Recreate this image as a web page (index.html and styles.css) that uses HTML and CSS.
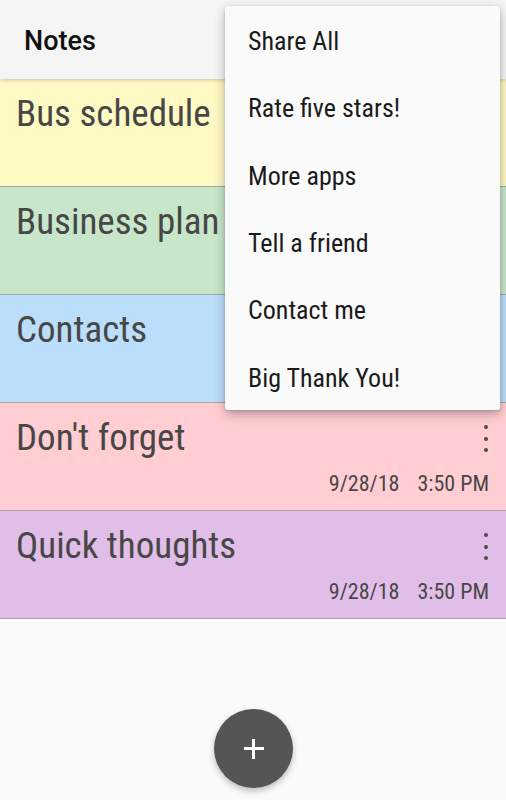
FILE: index.html
```html
<!DOCTYPE html>
<html lang="en">
<head>
<meta charset="utf-8">
<title>Notes</title>
<link rel="stylesheet" href="styles.css">
</head>
<body>
<div class="app">
  <header class="toolbar"><h1 class="toolbar-title">Notes</h1></header>
  <main class="notes">
    <article class="note note-yellow">
      <div class="note-top"><h2 class="note-title">Bus schedule</h2><span class="kebab"><i></i><i></i><i></i></span></div>
      <div class="note-date"></div>
    </article>
    <article class="note note-green">
      <div class="note-top"><h2 class="note-title">Business plan</h2><span class="kebab"><i></i><i></i><i></i></span></div>
      <div class="note-date"></div>
    </article>
    <article class="note note-blue">
      <div class="note-top"><h2 class="note-title">Contacts</h2><span class="kebab"><i></i><i></i><i></i></span></div>
      <div class="note-date"></div>
    </article>
    <article class="note note-pink">
      <div class="note-top"><h2 class="note-title">Don't forget</h2><span class="kebab"><i></i><i></i><i></i></span></div>
      <div class="note-date"><span>9/28/18</span><span>3:50 PM</span></div>
    </article>
    <article class="note note-purple">
      <div class="note-top"><h2 class="note-title">Quick thoughts</h2><span class="kebab"><i></i><i></i><i></i></span></div>
      <div class="note-date"><span>9/28/18</span><span>3:50 PM</span></div>
    </article>
  </main>
  <button class="fab" aria-label="Add note"><span class="fab-plus"></span></button>
  <ul class="menu">
    <li class="menu-item">Share All</li>
    <li class="menu-item">Rate five stars!</li>
    <li class="menu-item">More apps</li>
    <li class="menu-item">Tell a friend</li>
    <li class="menu-item">Contact me</li>
    <li class="menu-item">Big Thank You!</li>
  </ul>
</div>
</body>
</html>
```
FILE: styles.css
```css
* { box-sizing: border-box; }
html, body { margin: 0; padding: 0; }
body {
  background: #fafafa;
  font-family: Roboto, "Noto Sans", sans-serif;
  width: 506px;
  height: 800px;
  overflow: hidden;
}
.app {
  position: relative;
  height: 800px;
  display: flex;
  flex-direction: column;
}
.toolbar {
  height: 79px;
  flex: none;
  background: #f5f5f5;
  display: flex;
  align-items: center;
  padding-left: 24px;
  position: relative;
  z-index: 1;
  box-shadow: 0 1px 4px rgba(0,0,0,0.22);
}
.toolbar-title {
  margin: 0;
  font-size: 27px;
  font-weight: 500;
  color: #111;
  padding-top: 2px;
}
.notes { display: flex; flex-direction: column; }
.note {
  height: 108px;
  border-bottom: 1px solid #a5a5a5;
  padding: 16px 17px 0 16px;
  display: flex;
  flex-direction: column;
  color: #474747;
  font-stretch: condensed;
}
.note-yellow { background: #fff9c4; }
.note-green { background: #c8e6c9; }
.note-blue { background: #bbdefb; }
.note-pink { background: #ffcdd2; }
.note-purple { background: #e1bee7; }
.note-top {
  display: flex;
  justify-content: space-between;
  align-items: flex-start;
}
.note-title {
  margin: 0;
  font-size: 37px;
  font-weight: 400;
  line-height: 37px;
}
.kebab {
  display: flex;
  flex-direction: column;
  gap: 7.5px;
  margin-top: 6px;
  margin-right: 1px;
}
.kebab i {
  display: block;
  width: 4px;
  height: 4px;
  border-radius: 50%;
  background: #4a4a4a;
}
.note-date {
  display: flex;
  justify-content: flex-end;
  gap: 18px;
  font-size: 22px;
  line-height: 22px;
  height: 22px;
  margin-top: 17px;
}
.fab {
  position: absolute;
  left: 214px;
  top: 709px;
  width: 79px;
  height: 79px;
  border-radius: 50%;
  border: none;
  background: #555555;
  box-shadow: 0 3px 6px rgba(0,0,0,0.25);
  padding: 0;
  display: flex;
  align-items: center;
  justify-content: center;
}
.fab-plus {
  position: relative;
  width: 20px;
  height: 20px;
}
.fab-plus::before, .fab-plus::after {
  content: "";
  position: absolute;
  background: #fff;
}
.fab-plus::before { left: 0; top: 8.5px; width: 20px; height: 3px; }
.fab-plus::after { top: 0; left: 8.5px; width: 3px; height: 20px; }
.menu {
  position: absolute;
  left: 225px;
  top: 6px;
  width: 275px;
  margin: 0;
  padding: 0;
  list-style: none;
  background: #fafafa;
  border-radius: 3px;
  box-shadow: 0 4px 12px rgba(0,0,0,0.28), 0 1px 3px rgba(0,0,0,0.15);
  z-index: 2;
}
.menu-item {
  height: 67.33px;
  display: flex;
  align-items: center;
  padding-left: 23px;
  padding-top: 3px;
  font-size: 26px;
  font-stretch: condensed;
  color: #1a1a1a;
}
```
